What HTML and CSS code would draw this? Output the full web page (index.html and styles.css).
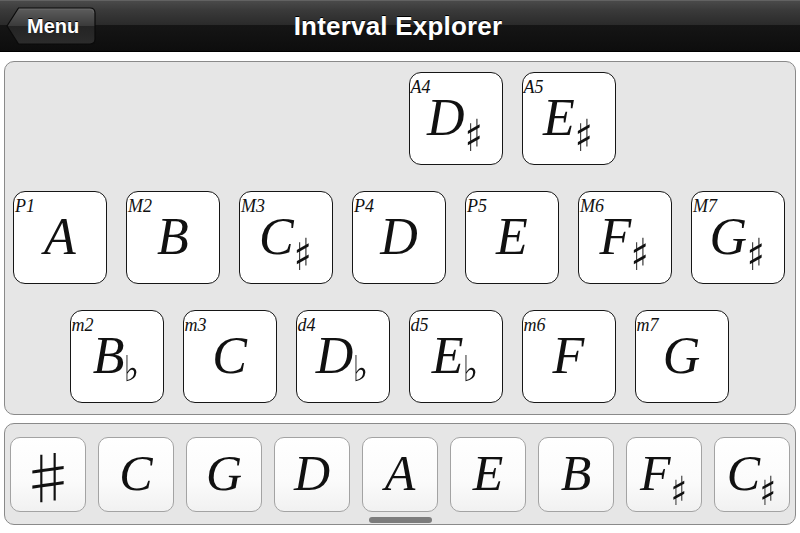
FILE: index.html
```html
<!DOCTYPE html>
<html lang="en">
<head>
<meta charset="utf-8">
<title>Interval Explorer</title>
<link rel="stylesheet" href="styles.css">
</head>
<body>
<header class="navbar">
  <div class="nav-left">
    <button class="back-btn" type="button">
      <svg class="back-shape" viewBox="0 0 90 38" width="90" height="38" aria-hidden="true">
        <defs>
          <linearGradient id="bg" x1="0" y1="0" x2="0" y2="1">
            <stop offset="0" stop-color="#5e5e5e"/>
            <stop offset="0.5" stop-color="#3a3a3a"/>
            <stop offset="0.5" stop-color="#242424"/>
            <stop offset="1" stop-color="#2c2c2c"/>
          </linearGradient>
        </defs>
        <path d="M12.5 1 H84 Q89 1 89 6 V32 Q89 37 84 37 H12.5 L1 19 Z" fill="url(#bg)" stroke="#0b0b0b" stroke-width="1.2"/>
        <path d="M13 2.2 H84 Q87.8 2.2 87.8 6" fill="none" stroke="#777" stroke-width="0.8" opacity="0.6"/>
      </svg>
      <span class="back-label">Menu</span>
    </button>
  </div>
  <h1 class="title">Interval Explorer</h1>
  <div class="nav-right"></div>
</header>

<main class="content">
  <section class="panel intervals">
    <div class="row">
      <div class="slot"></div>
      <div class="slot"></div>
      <div class="slot"></div>
      <div class="card"><span class="label">A4</span><span class="note">D<span class="acc sharp">♯</span></span></div>
      <div class="card"><span class="label">A5</span><span class="note">E<span class="acc sharp">♯</span></span></div>
      <div class="slot"></div>
    </div>
    <div class="row">
      <div class="card"><span class="label">P1</span><span class="note">A</span></div>
      <div class="card"><span class="label">M2</span><span class="note">B</span></div>
      <div class="card"><span class="label">M3</span><span class="note">C<span class="acc sharp">♯</span></span></div>
      <div class="card"><span class="label">P4</span><span class="note">D</span></div>
      <div class="card"><span class="label">P5</span><span class="note">E</span></div>
      <div class="card"><span class="label">M6</span><span class="note">F<span class="acc sharp">♯</span></span></div>
      <div class="card"><span class="label">M7</span><span class="note">G<span class="acc sharp">♯</span></span></div>
    </div>
    <div class="row">
      <div class="card"><span class="label">m2</span><span class="note">B<span class="acc flat">♭</span></span></div>
      <div class="card"><span class="label">m3</span><span class="note">C</span></div>
      <div class="card"><span class="label">d4</span><span class="note">D<span class="acc flat">♭</span></span></div>
      <div class="card"><span class="label">d5</span><span class="note">E<span class="acc flat">♭</span></span></div>
      <div class="card"><span class="label">m6</span><span class="note">F</span></div>
      <div class="card"><span class="label">m7</span><span class="note">G</span></div>
    </div>
  </section>

  <section class="panel keys">
    <div class="key-row">
      <div class="key"><span class="key-sharp">♯</span></div>
      <div class="key"><span class="key-note">C</span></div>
      <div class="key"><span class="key-note">G</span></div>
      <div class="key"><span class="key-note">D</span></div>
      <div class="key"><span class="key-note">A</span></div>
      <div class="key"><span class="key-note">E</span></div>
      <div class="key"><span class="key-note">B</span></div>
      <div class="key"><span class="key-note">F<span class="acc sharp small">♯</span></span></div>
      <div class="key"><span class="key-note">C<span class="acc sharp small">♯</span></span></div>
    </div>
    <div class="scroll-indicator"></div>
  </section>
</main>
</body>
</html>
```

FILE: styles.css
```css
html, body {
  margin: 0;
  padding: 0;
}

body {
  width: 800px;
  height: 533px;
  overflow: hidden;
  background: #ffffff;
  font-family: "Liberation Sans", Arial, sans-serif;
}

/* ---------- navigation bar ---------- */
.navbar {
  height: 52px;
  box-sizing: border-box;
  display: grid;
  grid-template-columns: 1fr auto 1fr;
  align-items: center;
  padding: 0 6px;
  background: linear-gradient(to bottom, #7a7a7a 0, #4a4a4a 1px, #3a3a3a 20%, #2a2a2a 49%, #151515 50%, #0d0d0d 100%);
  border-bottom: 1px solid #000;
}

.nav-left {
  display: flex;
  align-items: center;
}

.back-btn {
  position: relative;
  width: 90px;
  height: 38px;
  margin-top: 1px;
  padding: 0 0 0 21px;
  border: 0;
  background: transparent;
  display: flex;
  align-items: center;
  cursor: pointer;
}

.back-shape {
  position: absolute;
  left: 0;
  top: 0;
}

.back-label {
  position: relative;
  color: #fff;
  font: bold 20px/1 "Liberation Sans", Arial, sans-serif;
  text-shadow: 0 -1px 0 #000;
}

.title {
  margin: 0 0 0 -4px;
  color: #fff;
  font: bold 26px/1 "Liberation Sans", Arial, sans-serif;
  text-shadow: 0 -1px 0 #000;
  letter-spacing: 0.2px;
}

/* ---------- panels ---------- */
.content {
  display: flex;
  flex-direction: column;
}

.panel {
  margin: 0 4px;
  box-sizing: border-box;
  background: #e6e6e6;
  border: 1px solid #8a8a8a;
  border-radius: 10px;
}

.intervals {
  margin-top: 9px;
  height: 354px;
  padding: 10px 0;
  display: flex;
  flex-direction: column;
  align-items: center;
  gap: 26px;
}

.row {
  display: flex;
  gap: 19px;
  margin-left: -2px;
}

.slot,
.card {
  width: 94px;
  height: 93px;
  box-sizing: border-box;
  flex: none;
}

.card {
  position: relative;
  background: #fff;
  border: 1.5px solid #161616;
  border-radius: 12px;
  display: flex;
  justify-content: center;
  align-items: flex-start;
  padding-top: 25px;
}

.label {
  position: absolute;
  top: 7px;
  left: 1px;
  font: italic 18px/14px "Liberation Serif", "Times New Roman", serif;
  color: #111;
}

.note {
  display: block;
  font: italic 52px/40px "Liberation Serif", "Times New Roman", serif;
  color: #111;
  white-space: nowrap;
}

.acc {
  display: inline-block;
  font-family: "DejaVu Sans", sans-serif;
  font-style: normal;
  font-weight: bold;
  color: #111;
  line-height: 1;
  filter: grayscale(1);
}

.acc.sharp {
  font-size: 44px;
  vertical-align: -16px;
  margin-left: -2px;
  transform: scaleX(0.85);
}

.acc.flat {
  font-size: 36px;
  vertical-align: -8px;
  margin-left: -1px;
  transform: scaleX(0.9);
}

.acc.sharp.small {
  font-size: 40px;
  vertical-align: -15px;
}

/* ---------- key strip ---------- */
.keys {
  margin-top: 8px;
  height: 102px;
  padding: 13px 5px 0;
  display: flex;
  flex-direction: column;
  align-items: center;
}

.key-row {
  display: flex;
  gap: 12px;
}

.key {
  width: 76px;
  height: 75px;
  box-sizing: border-box;
  border: 1.5px solid #a3a3a3;
  border-radius: 10px;
  background: linear-gradient(to bottom, #ffffff 0, #fbfbfb 60%, #f1f1f1 100%);
  display: flex;
  justify-content: center;
  align-items: flex-start;
  padding-top: 10px;
}

.key-note {
  display: block;
  font: italic 50px/50px "Liberation Serif", "Times New Roman", serif;
  color: #111;
  white-space: nowrap;
}

.key-sharp {
  display: block;
  margin-top: -2px;
  font: 100 58px/58px "Noto Sans CJK JP", "DejaVu Sans", sans-serif;
  color: #111;
  filter: grayscale(1);
}

.scroll-indicator {
  margin-top: 5px;
  width: 63px;
  height: 6px;
  border-radius: 3px;
  background: #7c7c7c;
}
```
